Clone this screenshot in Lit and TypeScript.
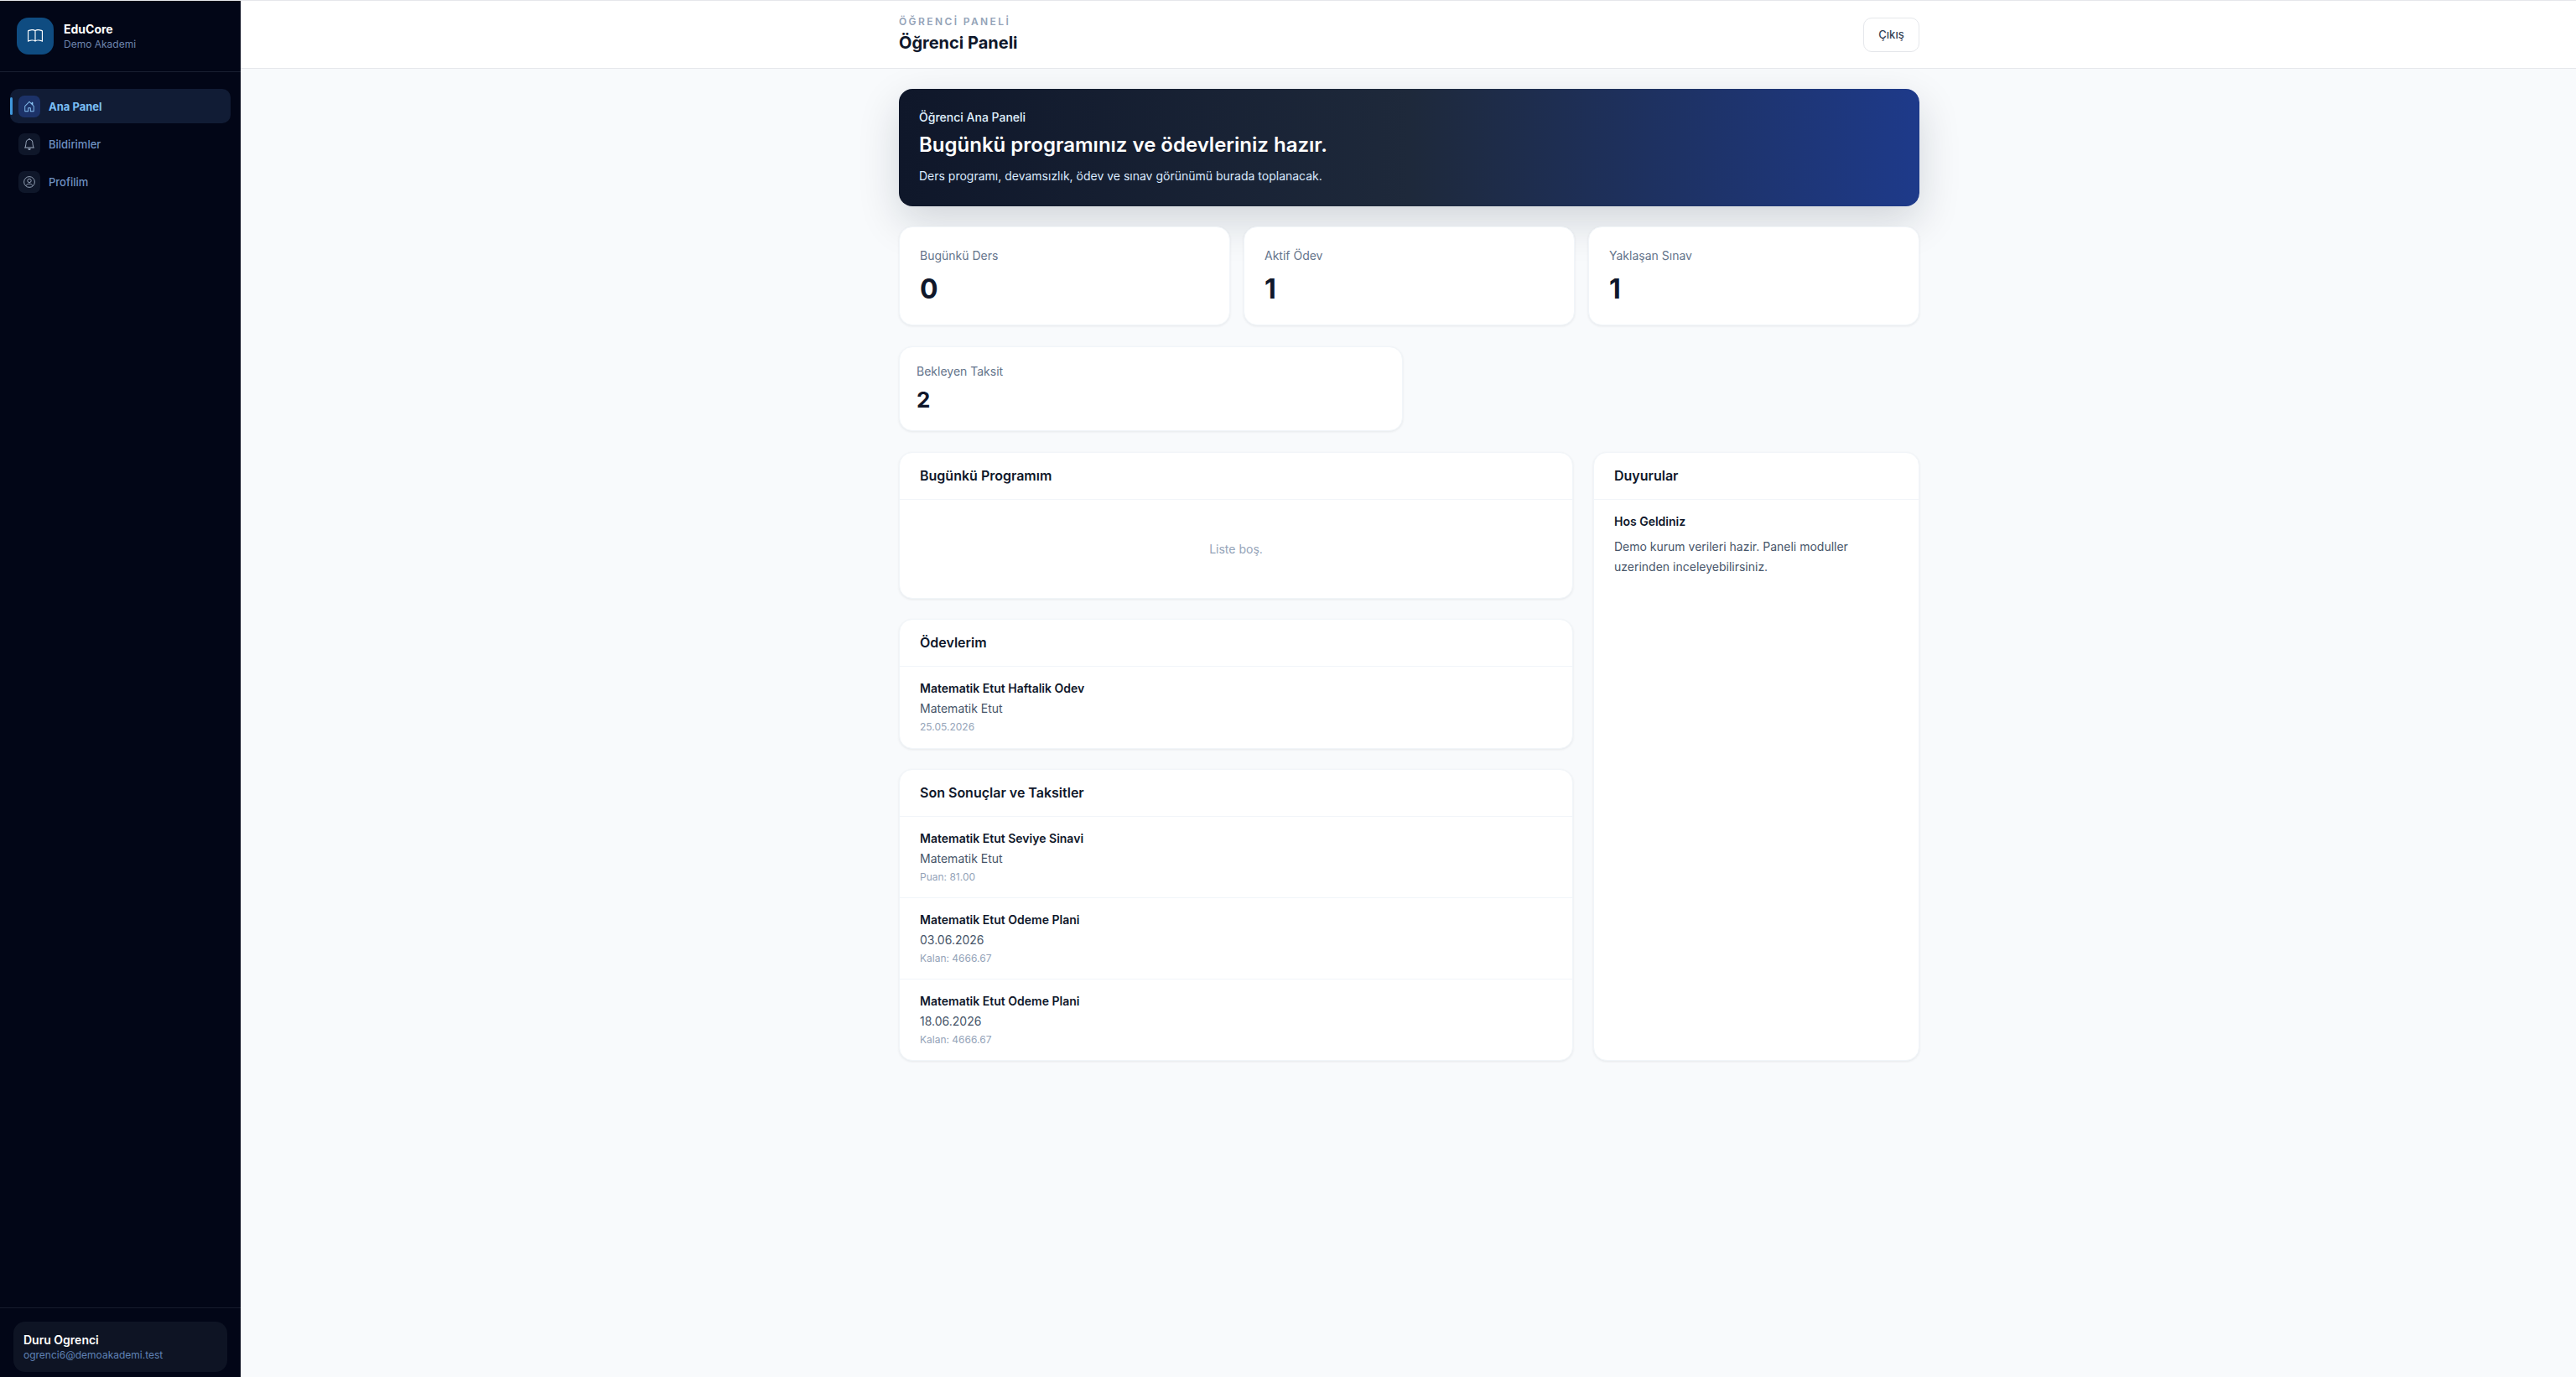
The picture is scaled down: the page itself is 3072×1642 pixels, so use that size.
import { LitElement, html, css, svg } from "lit";
import { customElement } from "lit/decorators.js";

const icons: Record<string, unknown> = {
  book: svg`<path d="M1 2.828c.885-.37 2.154-.769 3.388-.893 1.33-.134 2.458.063 3.112.752v9.746c-.935-.53-2.12-.603-3.213-.493-1.18.12-2.37.461-3.287.811zm7.5-.141c.654-.689 1.782-.886 3.112-.752 1.234.124 2.503.523 3.388.893v9.923c-.918-.35-2.107-.692-3.287-.81-1.094-.111-2.278-.039-3.213.492zM8 1.783C7.015.936 5.587.81 4.287.94c-1.514.153-3.042.672-3.994 1.105A.5.5 0 0 0 0 2.5v11a.5.5 0 0 0 .707.455c.882-.4 2.303-.881 3.68-1.02 1.409-.142 2.59.087 3.223.877a.5.5 0 0 0 .78 0c.633-.79 1.814-1.019 3.222-.877 1.378.139 2.8.62 3.681 1.02A.5.5 0 0 0 16 13.5v-11a.5.5 0 0 0-.293-.455c-.952-.433-2.48-.952-3.994-1.105C10.413.809 8.985.936 8 1.783"/>`,
  house: svg`<path d="M8.354 1.146a.5.5 0 0 0-.708 0l-6 6A.5.5 0 0 0 1.5 7.5v7a.5.5 0 0 0 .5.5h4.5a.5.5 0 0 0 .5-.5v-4h2v4a.5.5 0 0 0 .5.5H14a.5.5 0 0 0 .5-.5v-7a.5.5 0 0 0-.146-.354L13 5.793V2.5a.5.5 0 0 0-.5-.5h-1a.5.5 0 0 0-.5.5v1.293zM2.5 14V7.707l5.5-5.5 5.5 5.5V14H10v-4a.5.5 0 0 0-.5-.5h-3a.5.5 0 0 0-.5.5v4z"/>`,
  bell: svg`<path d="M8 16a2 2 0 0 0 2-2H6a2 2 0 0 0 2 2M8 1.918l-.797.161A4 4 0 0 0 4 6c0 .628-.134 2.197-.459 3.742-.16.767-.376 1.566-.663 2.258h10.244c-.287-.692-.502-1.49-.663-2.258C12.134 8.197 12 6.628 12 6a4 4 0 0 0-3.203-3.92zM14.22 12c.223.447.481.801.78 1H1c.299-.199.557-.553.78-1C2.68 10.2 3 6.88 3 6c0-2.42 1.72-4.44 4.005-4.901a1 1 0 1 1 1.99 0A5 5 0 0 1 13 6c0 .88.32 4.2 1.22 6"/>`,
  person: svg`<g fill="none" stroke="currentColor" stroke-width="1"><circle cx="8" cy="8" r="7.3"/><circle cx="8" cy="6.2" r="2.5"/><path d="M3.3 13.3c1-1.9 2.7-2.8 4.7-2.8s3.7.9 4.7 2.8"/></g>`,
};

const icon = (n: string) => html`<svg viewBox="0 0 16 16" fill="currentColor">${icons[n]}</svg>`;

const nav = [
  { label: "Ana Panel", icon: "house", active: true },
  { label: "Bildirimler", icon: "bell", active: false },
  { label: "Profilim", icon: "person", active: false },
];

const homework = [{ title: "Matematik Etut Haftalik Odev", sub: "Matematik Etut", meta: "25.05.2026" }];
const results = [
  { title: "Matematik Etut Seviye Sinavi", sub: "Matematik Etut", meta: "Puan: 81.00" },
  { title: "Matematik Etut Odeme Plani", sub: "03.06.2026", meta: "Kalan: 4666.67" },
  { title: "Matematik Etut Odeme Plani", sub: "18.06.2026", meta: "Kalan: 4666.67" },
];

@customElement("app-root")
export class AppRoot extends LitElement {
  static styles = css`
    :host {
      display: flex;
      height: 1642px;
      box-sizing: border-box;
      border-top: 1px solid #e5e7eb;
      background: #f8fafc;
      font-family: Inter, "Noto Sans", sans-serif;
      color: #0f172a;
      overflow: hidden;
    }
    * { box-sizing: border-box; }
    .sidebar {
      width: 287px;
      flex: none;
      background: #020617;
      display: flex;
      flex-direction: column;
    }
    .brand {
      height: 85px;
      padding: 20px 20px 0;
      display: flex;
      gap: 12px;
      border-bottom: 1px solid rgba(148, 163, 184, 0.16);
    }
    .logo {
      width: 44px;
      height: 44px;
      border-radius: 14px;
      background: #0f4c81;
      color: #fff;
      display: flex;
      align-items: center;
      justify-content: center;
    }
    .logo svg { width: 18px; height: 18px; }
    .brand-text { padding-top: 4px; }
    .brand-name { font-size: 14px; line-height: 20px; font-weight: 700; color: #fff; }
    .brand-sub { font-size: 12px; line-height: 16px; color: #6d84ad; }
    nav {
      flex: 1;
      padding: 20px 12px;
      display: flex;
      flex-direction: column;
      gap: 4px;
    }
    .item {
      position: relative;
      height: 41px;
      padding-left: 10px;
      display: flex;
      align-items: center;
      gap: 10px;
      border-radius: 10px;
      font-size: 13px;
      font-weight: 500;
      color: #6f91c2;
    }
    .item .box {
      width: 26px;
      height: 26px;
      border-radius: 7px;
      background: #0f172a;
      color: #a3b1c6;
      display: flex;
      align-items: center;
      justify-content: center;
    }
    .item svg { width: 14px; height: 14px; }
    .item.active { background: #111c35; color: #7cc0f7; font-weight: 700; }
    .item.active .box { background: #1c3268; color: #8cc8f8; }
    .item.active::before {
      content: "";
      position: absolute;
      left: 0;
      top: 10px;
      width: 3px;
      height: 21px;
      border-radius: 2px;
      background: #3f97dc;
    }
    .foot {
      padding: 16px 16px 6px;
      border-top: 1px solid rgba(148, 163, 184, 0.14);
    }
    .user {
      height: 60px;
      padding: 12px;
      border-radius: 14px;
      background: #0e1424;
    }
    .user-name { font-size: 14px; line-height: 20px; font-weight: 600; color: #fff; }
    .user-mail { font-size: 12px; line-height: 16px; color: #5f82b5; }

    .main { flex: 1; min-width: 0; display: flex; flex-direction: column; }
    .topbar {
      height: 81px;
      flex: none;
      background: #fff;
      border-bottom: 1px solid #e5e7eb;
      display: flex;
      justify-content: center;
      position: relative;
      z-index: 1;
    }
    .wrap { width: 1217px; margin-left: 2px; }
    .topbar .wrap { display: flex; align-items: center; justify-content: space-between; }
    .eyebrow {
      font-size: 12px;
      line-height: 16px;
      font-weight: 600;
      letter-spacing: 0.2em;
      color: #94a3b8;
    }
    .page-title { margin-top: 4px; font-size: 20px; line-height: 26px; font-weight: 700; color: #0f172a; }
    .logout {
      height: 41px;
      width: 67px;
      border: 1px solid #e5e7eb;
      border-radius: 10px;
      background: #fff;
      font: 500 13px Inter, sans-serif;
      color: #334155;
      padding: 0;
    }
    .content { flex: 1; display: flex; justify-content: center; padding-top: 24px; }
    .stack { display: flex; flex-direction: column; gap: 24px; }
    .hero {
      height: 140px;
      border-radius: 16px;
      padding: 24px;
      background: linear-gradient(90deg, #0f172a, #1e293b 50%, #1e3a8a);
      box-shadow: 0 18px 50px rgba(15, 23, 42, 0.16);
      color: #fff;
    }
    .hero-kicker { font-size: 14px; line-height: 20px; font-weight: 500; color: #e0f2fe; }
    .hero-title { margin-top: 7px; font-size: 24px; line-height: 32px; font-weight: 600; }
    .hero-sub { margin-top: 11px; font-size: 14px; line-height: 20px; color: #dbeafe; }
    .stats {
      display: grid;
      grid-template-columns: repeat(3, minmax(0, 1fr));
      gap: 16px;
      margin-bottom: 1px;
    }
    .stats.two { grid-template-columns: repeat(2, minmax(0, 1fr)); }
    .card {
      background: #fff;
      border: 1px solid #f1f5f9;
      border-radius: 16px;
      box-shadow: 0 1px 3px rgba(15, 23, 42, 0.08);
    }
    .stat { height: 118px; padding: 24px 24px 0; }
    .stat-label { font-size: 14px; line-height: 20px; color: #64748b; }
    .stat-value { margin-top: 10px; font-size: 32px; line-height: 40px; font-weight: 700; color: #0f172a; }
    .stat.small { height: 101px; padding: 19px 20px 0; }
    .stat.small .stat-value { margin-top: 6px; font-size: 26px; line-height: 36px; font-weight: 700; }
    .columns { display: grid; grid-template-columns: minmax(0, 1fr) 389px; gap: 24px; }
    .left { display: flex; flex-direction: column; gap: 24px; }
    .panel { overflow: hidden; }
    .panel-head {
      height: 56px;
      padding: 0 0 2px 24px;
      display: flex;
      align-items: center;
      border-bottom: 1px solid #f1f5f9;
      font-size: 16px;
      font-weight: 600;
      color: #0f172a;
    }
    .empty {
      height: 117px;
      padding-bottom: 1px;
      display: flex;
      align-items: center;
      justify-content: center;
      font-size: 14px;
      color: #94a3b8;
    }
    .row { height: 97px; padding: 16px 24px 0; border-bottom: 1px solid #f1f5f9; }
    .row:last-child { border-bottom: 0; }
    .rows-many .row:last-child { height: 96px; }
    .row-title { font-size: 14px; line-height: 20px; font-weight: 600; color: #0f172a; }
    .row-sub { margin-top: 4px; font-size: 14px; line-height: 20px; color: #475569; }
    .row-meta { margin-top: 4px; font-size: 12px; line-height: 16px; color: #94a3b8; }
    .notice { padding: 16px 24px; }
    .notice-text { margin-top: 8px; font-size: 14px; line-height: 24px; color: #475569; }
  `;

  private rows(list: { title: string; sub: string; meta: string }[]) {
    return list.map(
      (r) => html`<div class="row">
        <div class="row-title">${r.title}</div>
        <div class="row-sub">${r.sub}</div>
        <div class="row-meta">${r.meta}</div>
      </div>`
    );
  }

  render() {
    return html`
      <aside class="sidebar">
        <div class="brand">
          <div class="logo">${icon("book")}</div>
          <div class="brand-text">
            <div class="brand-name">EduCore</div>
            <div class="brand-sub">Demo Akademi</div>
          </div>
        </div>
        <nav>
          ${nav.map(
            (n) => html`<div class="item ${n.active ? "active" : ""}">
              <span class="box">${icon(n.icon)}</span><span>${n.label}</span>
            </div>`
          )}
        </nav>
        <div class="foot">
          <div class="user">
            <div class="user-name">Duru Ogrenci</div>
            <div class="user-mail">ogrenci6@demoakademi.test</div>
          </div>
        </div>
      </aside>
      <div class="main">
        <header class="topbar">
          <div class="wrap">
            <div>
              <div class="eyebrow">ÖĞRENCİ PANELİ</div>
              <div class="page-title">Öğrenci Paneli</div>
            </div>
            <button class="logout">Çıkış</button>
          </div>
        </header>
        <div class="content">
          <div class="wrap stack">
            <section class="hero">
              <div class="hero-kicker">Öğrenci Ana Paneli</div>
              <div class="hero-title">Bugünkü programınız ve ödevleriniz hazır.</div>
              <div class="hero-sub">Ders programı, devamsızlık, ödev ve sınav görünümü burada toplanacak.</div>
            </section>
            <div class="stats">
              <div class="card stat"><div class="stat-label">Bugünkü Ders</div><div class="stat-value">0</div></div>
              <div class="card stat"><div class="stat-label">Aktif Ödev</div><div class="stat-value">1</div></div>
              <div class="card stat"><div class="stat-label">Yaklaşan Sınav</div><div class="stat-value">1</div></div>
            </div>
            <div class="stats two">
              <div class="card stat small"><div class="stat-label">Bekleyen Taksit</div><div class="stat-value">2</div></div>
            </div>
            <div class="columns">
              <div class="left">
                <div class="card panel">
                  <div class="panel-head">Bugünkü Programım</div>
                  <div class="empty">Liste boş.</div>
                </div>
                <div class="card panel">
                  <div class="panel-head">Ödevlerim</div>
                  ${this.rows(homework)}
                </div>
                <div class="card panel rows-many">
                  <div class="panel-head">Son Sonuçlar ve Taksitler</div>
                  ${this.rows(results)}
                </div>
              </div>
              <div class="card panel">
                <div class="panel-head">Duyurular</div>
                <div class="notice">
                  <div class="row-title">Hos Geldiniz</div>
                  <div class="notice-text">Demo kurum verileri hazir. Paneli moduller uzerinden inceleyebilirsiniz.</div>
                </div>
              </div>
            </div>
          </div>
        </div>
      </div>
    `;
  }
}
